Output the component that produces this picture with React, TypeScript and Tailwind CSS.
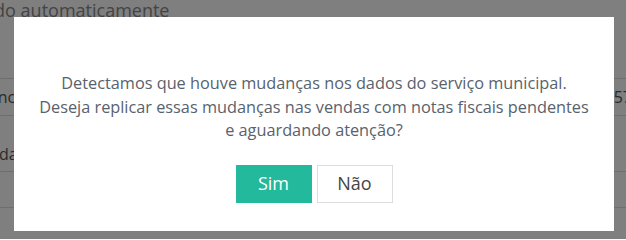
import { useState } from 'react'

const font = { fontFamily: '"Open Sans", "Noto Sans", sans-serif' }

function BackgroundPage() {
  return (
    <div className="w-[626px] h-[239px] overflow-hidden bg-white text-[#555]">
      <div className="h-[78px]">
        <p className="-ml-[66px] text-[18px] leading-[20px] text-[#888]">Calculado automaticamente</p>
      </div>
      <div className="border-t border-[#ddd] h-[37px] flex items-center justify-between text-[16px]">
        <span className="-ml-[51px]">Referência</span>
        <span className="-mr-[6px]">57</span>
      </div>
      <div className="border-t border-[#ddd] h-[56px] flex items-center pt-[20px] text-[16px]">
        <span className="-ml-[1px]">dados</span>
      </div>
      <div className="border-t border-[#ddd] h-[36px]" />
      <div className="border-t border-[#ddd] h-[32px]" />
    </div>
  )
}

export default function App() {
  const [open, setOpen] = useState(true)

  return (
    <div className="relative w-[626px] h-[239px] overflow-hidden" style={font}>
      <BackgroundPage />
      {open && (
        <div className="absolute inset-0 bg-black/50 pl-[14px] pt-[17px]">
          <div className="w-[600px] h-[214px] bg-white pt-[55px] flex flex-col items-center">
            <p className="text-center text-[16.3px] leading-[23.5px] text-[#58626d]">
              Detectamos que houve mudanças nos dados do serviço municipal.
              <br />
              Deseja replicar essas mudanças nas vendas com notas fiscais pendentes
              <br />
              e aguardando atenção?
            </p>
            <div className="mt-[22px] flex gap-[5px]">
              <button
                type="button"
                onClick={() => setOpen(false)}
                className="w-[76px] h-[38px] bg-[#22b99c] text-white text-[18px]"
              >
                Sim
              </button>
              <button
                type="button"
                onClick={() => setOpen(false)}
                className="w-[76px] h-[38px] bg-white border border-[#ddd] text-[#444] text-[18px]"
              >
                Não
              </button>
            </div>
          </div>
        </div>
      )}
    </div>
  )
}
